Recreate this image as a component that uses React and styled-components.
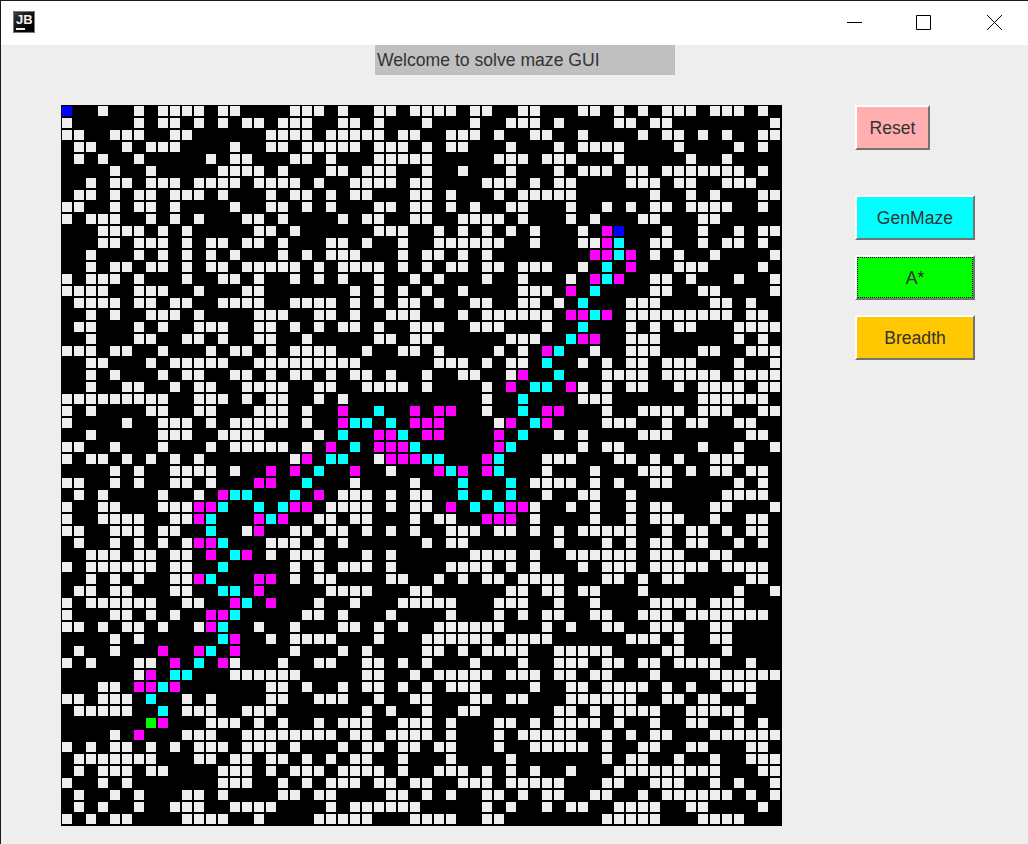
import styled, { createGlobalStyle } from "styled-components";

const GlobalStyle = createGlobalStyle`
  html, body {
    margin: 0;
    padding: 0;
    height: 100%;
    overflow: hidden;
    background: #eeeeee;
  }
`;

// . wall, # open, m visited, c path, b start/end, g goal
const MAZE = [
  "b..#..#.####.##....# ##.#..##.####.##..## ...##.#.#.###.###.#.",
  "#.....#.##.#.#.##.## #..##.#...#...#..### .#....##.##........#",
  "##..###..##......### #.#####.##..###.#..# #..#....#.##.#.#..##",
  ".##..#.###....#..##. #####.###.#.##...#.. .#.####....#....#.#.",
  ".#.#..#.....#.##...# #.#...#####.....###. ###...#.....#..#....",
  "....#..#.....####.#. ..##.###..#..#...#.. .#.###.##.#######.#.",
  "..#.##.###.####.#### .#..####.##....###.# .##....###.##..###..",
  ".##.#.##.###.#...#.# #.#.##...##.#...#.## ###......#..#.#...##",
  "##..#.##.#....#..##. #.#...##.##.#.#..##. ..#..#.#.##.####..#.",
  "#.###..#.#.#...##.#. ...#.##..##..####.#. ..#.#...##...##.....",
  "...####.#.#.....##.# ......###..#.#.#.#.# ...#.mb...#..#..#.##",
  "...##.###.#.##.##.#. ..##.#..#..######..# ...##mc..##..#.##.#.",
  "..#...#.#.#.#.#...#. #.###...#.##.#.#.... ....mmcm.#.#..#....#",
  "..#.##.##.#.##.##### .#.####.#.#.##.##.## #..#.c.m...###....#.",
  "#.###.#...#..##.#..# .#.#..#..#.#...#..#. ..#.mcm..##.#...#..#",
  "####..###..#...##... ....#.#.#.#..#....## #.m.c....##..##....#",
  ".####.##.##..####..# ###.#.#.##.#..##..## .#.c...###....##.#..",
  "..#.#..###.#....###. .##.#..###...#.##### #.mmcm.#########.##.",
  ".##...#.#..###..##.# .#.##.#..###..###... #..c...#.#.##...####",
  "..#...##..##.#..##.. #.....##.##......### ..cmm..###......#.#.",
  "###.##..#...#.##.#.# ###..#..##.#....#.#. mc..#..###...##..###",
  "..##...#.#####..#### #####......###.#.##. c..#.#.##.###...#..#",
  "..#.#...#.##..##.#.# #.#.##.#..#..##..#m. .c...####.#####.####",
  "..#..##..#.##..####. .##..####.#....#.m.c c.m#.#.##..#.####.##",
  "#########..###.#.##. .#.#...........#..c. ...###.......######.",
  "#.#....##..##...###. #..m..c..m.mm..#..c. mm...#..####.###..##",
  "#....#..###.#.#####. #..mcc.c.mmm....#m.c m....###..#.##..##..",
  "..#.....###..####... .#.c..mmc.mm....m.c. .#.#....###......##.",
  "##..#...#...#.#####. #.m.c.mmmc......mc.. ...#.##......#..#..#",
  "#.##.#.#.#.#.......# m.cc..#mmmcc...mc... ###...##.#.#..###...",
  "....#.#..####.#..m.m .c..m..#...mcm.mc... #...#...###.#.##.##.",
  "##..#.#..##.#...mm.. c...#....#...c...c.# ###.#.#..##.....#.#.",
  ".#.#....#..#.mcc...c .m.###.#.##..c.c.c.. #..##..#.......####.",
  "#..##...###mmc..c.cm m.####.#.##.m.c.cmm# ..#.#..#.##...##...#",
  "#..####..##mc...mcm. .##.##...#.##..mmm.# ....#..#.###..#..##.",
  "##..###.##..c..#m..# #.##.#.#.#..###.##.# .#.#####..#.##.#.##.",
  ".#..#.#.#.#mmc...### .#.#......#.##...... .#...#.#.##.##..#.#.",
  "..###.##.##.m.cm.#.# ##...#.#......####.# ..######.###..##....",
  "#.######.##..c.....# .#.###.#....####.#.# ...#.###.#####.####.",
  "..#.#.#..##mc...mm.# .##....##..#.#.##.## ##...##.#.##.....##.",
  ".##.##...##..cc.m... ..####...##......##. ##.##...#.......#..#",
  "#.######..##..mc.m.. .#..#...#####...###. .#..#....####.###...",
  "#...##.#.#..mmc..... ##.#...#....#...#.#. ##..##..###.#######.",
  "##.#.##.#..#mc..#..# ...##.#.#..######... #.#..##..###..##....",
  "....#.#......cm..#.# ###...#...######.### #......###.#..##....",
  ".#..#...m..mc.m....# ...#.#....##.#.####. .#####....##...#....",
  "#.#...##.m.c.m#...#. .##..##.#.#...#...#. .###.##.##.####..#..",
  "......#m.cc...###### .....##..#.#####.### .##.##...#....######",
  "...##.mmcm.......##. #..#.##.#.#.###....# ..##.####.#.#..###..",
  "##.###.c..#.#....##. .###..#..##...##.##. ..######..##.##..#..",
  ".#####..c.###..###.. .....#.#..#..##..... .##.#.####..#####...",
  ".......gm...###.#.#. .#.###..###.#...##.# .####.#..#..##..#.#.",
  "....#.m...###..##### ###.##.####.#...#.## ###..#.#.##...######",
  "#.#.##.#.#.###.###.# ...#.##.##.##...#..# ####.#..##..##...##.",
  ".#######...##.##.##. #.#.##..#...#....#.. .....#.##..#..#..###",
  ".#.###.##....###.#.# ##.####.#..###.#.#.# ..#...#########...##",
  "#..#.#.......###..#. #.###.##.##..###.### ##...##..###..#.#..#",
  ".#..#.#...##.#....## .##....##.#.#..##.#. ##..##..#.######.#.#",
  ".#.#..#..###..####.. ..#.######.....#.#.. #.##..####..##....#.",
  "#.#.##....####..#... .#####...####..##... .....#####...####...",
].map((row) => row.replace(/ /g, ""));

const CELL_COLORS = {
  ".": "transparent",
  "#": "#eeeeee",
  m: "#ff00ff",
  c: "#00ffff",
  b: "#0000ff",
  g: "#00ff00",
};

const Window = styled.div`
  width: 1028px;
  height: 844px;
  box-sizing: border-box;
  border-top: 1px solid #1a1a1a;
  border-left: 1px solid #1a1a1a;
  background: #eeeeee;
  font-family: "Liberation Sans", Arial, sans-serif;
  color: #333333;
`;

const TitleBar = styled.div`
  height: 44px;
  background: #ffffff;
  display: flex;
  align-items: center;
  justify-content: space-between;
  padding-left: 12px;
`;

const Logo = styled.div`
  width: 22px;
  height: 22px;
  margin-top: -2px;
  box-sizing: border-box;
  border: 1px solid #7a7a7a;
  background: linear-gradient(135deg, #3a3a3a, #000000 70%);
  color: #f0f0f0;
  font-size: 13px;
  font-weight: 700;
  line-height: 13px;
  display: flex;
  flex-direction: column;
  padding: 1px 2px 0;
  overflow: hidden;
`;

const LogoBar = styled.span`
  display: block;
  flex: none;
  width: 9px;
  height: 2px;
  margin-top: 2px;
  background: #f0f0f0;
`;

const WindowControls = styled.div`
  display: flex;
  align-items: center;
  height: 100%;
`;

const ControlButton = styled.div`
  width: ${(props) => props.$width}px;
  display: flex;
  align-items: center;
`;

const Banner = styled.div`
  width: 298px;
  height: 30px;
  margin-left: 374px;
  padding-left: 2px;
  background: #c0c0c0;
  font-size: 17.6px;
  line-height: 30px;
`;

const Main = styled.div`
  display: flex;
  align-items: flex-start;
  padding: 30px 0 0 60px;
`;

const Board = styled.div`
  display: grid;
  grid-template-columns: repeat(60, 12px);
  grid-auto-rows: 12px;
  padding: 0 1px 1px 0;
  background: #000000;
`;

const Cell = styled.div`
  margin: 1px;
  background: ${(props) => CELL_COLORS[props.$kind]};
`;

const SidePanel = styled.div`
  display: flex;
  flex-direction: column;
  align-items: flex-start;
  margin-left: 73px;
`;

const ButtonGroup = styled.div`
  display: flex;
  flex-direction: column;
  gap: 15px;
  margin-top: 45px;
`;

const Button = styled.button`
  width: ${(props) => props.$width}px;
  height: 45px;
  box-sizing: border-box;
  border: 2px solid;
  border-color: #ffffff #737373 #737373 #ffffff;
  border-radius: 0;
  padding: 2px 0 0;
  background: ${(props) => props.$color};
  color: #333333;
  font-family: inherit;
  font-size: 17.6px;
  outline: ${(props) => (props.$focused ? "1px dotted #000000" : "none")};
  outline-offset: -3px;
`;

export default function App() {
  return (
    <Window>
      <GlobalStyle />
      <TitleBar>
        <Logo>
          JB
          <LogoBar />
        </Logo>
        <WindowControls>
          <ControlButton $width={69}>
            <svg width="16" height="16" viewBox="0 0 16 16">
              <path d="M0 7.5H15" stroke="#000" fill="none" />
            </svg>
          </ControlButton>
          <ControlButton $width={71}>
            <svg width="16" height="16" viewBox="0 0 16 16">
              <path d="M0.5 0.5H14.5V14.5H0.5Z" stroke="#000" fill="none" />
            </svg>
          </ControlButton>
          <ControlButton $width={41}>
            <svg width="16" height="16" viewBox="0 0 16 16">
              <path d="M0 0L15 15M15 0L0 15" stroke="#000" fill="none" />
            </svg>
          </ControlButton>
        </WindowControls>
      </TitleBar>
      <Banner>Welcome to solve maze GUI</Banner>
      <Main>
        <Board>
          {MAZE.flatMap((row, y) =>
            [...row].map((kind, x) => <Cell key={`${x}-${y}`} $kind={kind} />)
          )}
        </Board>
        <SidePanel>
          <Button $width={75} $color="#ffafaf">
            Reset
          </Button>
          <ButtonGroup>
            <Button $width={120} $color="#00ffff">
              GenMaze
            </Button>
            <Button $width={120} $color="#00ff00" $focused>
              A*
            </Button>
            <Button $width={120} $color="#ffc800">
              Breadth
            </Button>
          </ButtonGroup>
        </SidePanel>
      </Main>
    </Window>
  );
}
